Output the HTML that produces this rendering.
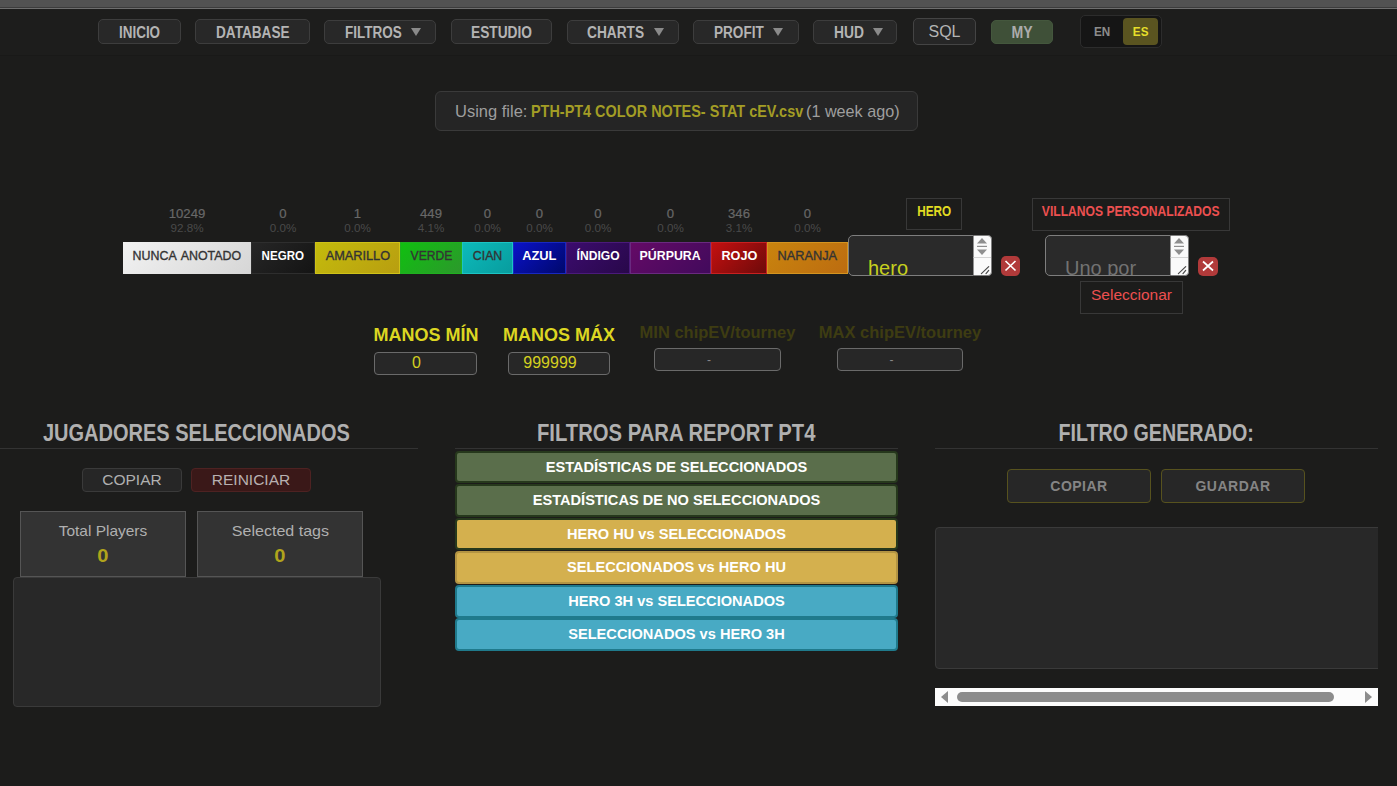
<!DOCTYPE html>
<html><head><meta charset="utf-8">
<style>
*{box-sizing:border-box;margin:0;padding:0}
html,body{width:1397px;height:786px;overflow:hidden;background:#1c1c1b;font-family:"Liberation Sans",sans-serif}
.a{position:absolute}
.c{position:absolute;display:flex;align-items:center;justify-content:center;white-space:nowrap}
.s{display:inline-block;white-space:nowrap}
#topstrip{left:0;top:0;width:1397px;height:7px;background:#525252}
#topline1{left:0;top:7px;width:1397px;height:1px;background:#3c3c3c}
#topline2{left:0;top:8px;width:1397px;height:1px;background:#6e6e6e}
#nav{left:0;top:9px;width:1397px;height:47px;background:#1d1d1c;border-bottom:1px solid #191918}
.nb{background:#282828;border:1px solid #3d3d3d;border-radius:5px;color:#b4b4b4;font-weight:bold;font-size:16px;padding-top:2px}
.nbx{background:#282828;border:1px solid #3d3d3d;border-radius:5px}
.ntx{top:22px;line-height:22px;font-size:16px;font-weight:bold;color:#b4b4b4;white-space:nowrap;transform-origin:0 0}
.ntri{top:28px;width:0;height:0;border-left:5px solid transparent;border-right:5px solid transparent;border-top:8.5px solid #8a8a8a}
.tri{display:inline-block;width:0;height:0;border-left:4.5px solid transparent;border-right:4.5px solid transparent;border-top:8.5px solid #8a8a8a;margin-top:-2px}
.cnt{color:#686868;font-size:12.5px;padding-top:2px;-webkit-text-stroke:.2px #686868;transform:scaleX(1.05)}
.pct{color:#4a4a4a;font-size:11px;transform:scaleX(1.06)}
.cb{font-weight:bold;font-size:13px;padding-bottom:5px}
.cd{font-weight:normal}
.hdr{color:#b0b0b0;font-weight:bold;font-size:23px}
.fb{border:2px solid #26381c;border-radius:4px;background:#5a6e4b;color:#fff;font-weight:bold;font-size:14.6px;letter-spacing:0px;padding-bottom:1px}
</style></head><body>
<div class="a" id="topstrip"></div><div class="a" id="topline1"></div><div class="a" id="topline2"></div>
<div class="a" id="nav"></div>

<!-- nav buttons -->
<div class="a nbx" style="left:98px;top:19px;width:83px;height:25px"></div>
<div class="a ntx" style="left:119.2px;transform:scaleX(0.84)">INICIO</div>
<div class="a nbx" style="left:195px;top:19px;width:115px;height:25px"></div>
<div class="a ntx" style="left:216.1px;transform:scaleX(0.85)">DATABASE</div>
<div class="a nbx" style="left:324px;top:20px;width:112px;height:24px"></div>
<div class="a ntx" style="left:344.8px;transform:scaleX(0.842)">FILTROS</div>
<div class="a ntri" style="left:411.0px"></div>
<div class="a nbx" style="left:451px;top:19px;width:101px;height:25px"></div>
<div class="a ntx" style="left:471.4px;transform:scaleX(0.858)">ESTUDIO</div>
<div class="a nbx" style="left:567px;top:20px;width:112px;height:24px"></div>
<div class="a ntx" style="left:587.3px;transform:scaleX(0.856)">CHARTS</div>
<div class="a ntri" style="left:654.2px"></div>
<div class="a nbx" style="left:693px;top:20px;width:106px;height:24px"></div>
<div class="a ntx" style="left:714.0px;transform:scaleX(0.848)">PROFIT</div>
<div class="a ntri" style="left:773.0px"></div>
<div class="a nbx" style="left:813px;top:20px;width:84px;height:24px"></div>
<div class="a ntx" style="left:833.7px;transform:scaleX(0.862)">HUD</div>
<div class="a ntri" style="left:873.0px"></div>
<div class="c nb" style="left:913px;top:18px;width:63px;height:27px;font-weight:normal;border-color:#444;background:#262626;padding-top:0">SQL</div>
<div class="c nb" style="left:991px;top:20px;width:62px;height:24px;background:#3f5038;border-color:#44573d;color:#acacac"><span class="s" style="transform:scaleX(.88)">MY</span></div>
<div class="a" style="left:1080px;top:15px;width:82px;height:33px;background:#151515;border:1px solid #2c2c2c;border-radius:5px"></div>
<div class="c" style="left:1084px;top:18px;width:36px;height:27px;color:#8c8c8c;font-weight:bold;font-size:13px"><span class="s" style="transform:scaleX(.9)">EN</span></div>
<div class="c" style="left:1123px;top:18px;width:35px;height:27px;background:#5a5420;border-radius:4px;color:#e6de2a;font-weight:bold;font-size:13px"><span class="s" style="transform:scaleX(.9)">ES</span></div>

<!-- using file -->
<div class="a" style="left:435px;top:91px;width:483px;height:40px;background:#252525;border:1px solid #3a3a3a;border-radius:6px"></div>
<div class="a" style="left:455px;top:101px;font-size:16.5px;line-height:20px;color:#9e9e9e;white-space:nowrap">Using file:</div>
<div class="a" style="left:531px;top:101px;font-size:16.5px;line-height:20px;color:#a39d25;font-weight:bold;white-space:nowrap;transform-origin:0 0;transform:scaleX(.874)">PTH-PT4 COLOR NOTES- STAT cEV.csv</div>
<div class="a" style="left:806px;top:101px;font-size:16.2px;line-height:20px;color:#9e9e9e;white-space:nowrap">(1 week ago)</div>

<!-- counts -->
<div class="c cnt" style="left:123px;top:206px;width:128px;height:14px">10249</div>
<div class="c pct" style="left:123px;top:221px;width:128px;height:13px">92.8%</div>
<div class="c cnt" style="left:251px;top:206px;width:64px;height:14px">0</div>
<div class="c pct" style="left:251px;top:221px;width:64px;height:13px">0.0%</div>
<div class="c cnt" style="left:315px;top:206px;width:85px;height:14px">1</div>
<div class="c pct" style="left:315px;top:221px;width:85px;height:13px">0.0%</div>
<div class="c cnt" style="left:400px;top:206px;width:62px;height:14px">449</div>
<div class="c pct" style="left:400px;top:221px;width:62px;height:13px">4.1%</div>
<div class="c cnt" style="left:462px;top:206px;width:51px;height:14px">0</div>
<div class="c pct" style="left:462px;top:221px;width:51px;height:13px">0.0%</div>
<div class="c cnt" style="left:513px;top:206px;width:53px;height:14px">0</div>
<div class="c pct" style="left:513px;top:221px;width:53px;height:13px">0.0%</div>
<div class="c cnt" style="left:566px;top:206px;width:64px;height:14px">0</div>
<div class="c pct" style="left:566px;top:221px;width:64px;height:13px">0.0%</div>
<div class="c cnt" style="left:630px;top:206px;width:81px;height:14px">0</div>
<div class="c pct" style="left:630px;top:221px;width:81px;height:13px">0.0%</div>
<div class="c cnt" style="left:711px;top:206px;width:56px;height:14px">346</div>
<div class="c pct" style="left:711px;top:221px;width:56px;height:13px">3.1%</div>
<div class="c cnt" style="left:767px;top:206px;width:81px;height:14px">0</div>
<div class="c pct" style="left:767px;top:221px;width:81px;height:13px">0.0%</div>

<!-- color buttons -->
<div class="c cb" style="left:123px;top:242px;width:128px;height:32px;background:linear-gradient(135deg,#f2f2f2,#d6d6d6);color:#333"><span class="s" style="transform:scaleX(0.955);font-weight:normal;-webkit-text-stroke:.35px #333;word-spacing:2px">NUNCA ANOTADO</span></div>
<div class="c cb" style="left:251px;top:242px;width:64px;height:32px;background:linear-gradient(135deg,#262626,#141414);border:1px solid #2e2e2e;color:#fff"><span class="s" style="transform:scaleX(.89)">NEGRO</span></div>
<div class="c cb" style="left:315px;top:242px;width:85px;height:32px;background:linear-gradient(135deg,#c4bb0c,#b89e10);border:1px solid #cfc218;color:#333"><span class="s" style="transform:scaleX(0.98);font-weight:normal;-webkit-text-stroke:.35px #333">AMARILLO</span></div>
<div class="c cb" style="left:400px;top:242px;width:62px;height:32px;background:linear-gradient(135deg,#10c010,#2c982c);border:1px solid #20b020;color:#333"><span class="s" style="transform:scaleX(0.93);font-weight:normal;-webkit-text-stroke:.35px #333">VERDE</span></div>
<div class="c cb" style="left:462px;top:242px;width:51px;height:32px;background:linear-gradient(135deg,#0cbaba,#089c9e);border:1px solid #1cc4c4;color:#333"><span class="s" style="transform:scaleX(.95);font-weight:normal;-webkit-text-stroke:.35px #333">CIAN</span></div>
<div class="c cb" style="left:513px;top:242px;width:53px;height:32px;background:linear-gradient(135deg,#0a12c8,#00086c);border:1px solid #1828c0;color:#fff"><span class="s" style="transform:scaleX(0.99)">AZUL</span></div>
<div class="c cb" style="left:566px;top:242px;width:64px;height:32px;background:linear-gradient(135deg,#3c0c6e,#28084a);border:1px solid #4a1a7a;color:#fff"><span class="s" style="transform:scaleX(0.93)">ÍNDIGO</span></div>
<div class="c cb" style="left:630px;top:242px;width:81px;height:32px;background:linear-gradient(135deg,#640a66,#420a5c);border:1px solid #6a2a80;color:#fff"><span class="s" style="transform:scaleX(0.95)">PÚRPURA</span></div>
<div class="c cb" style="left:711px;top:242px;width:56px;height:32px;background:linear-gradient(135deg,#c41010,#6e0a0a);border:1px solid #c82020;color:#fff"><span class="s" style="transform:scaleX(0.975)">ROJO</span></div>
<div class="c cb" style="left:767px;top:242px;width:81px;height:32px;background:linear-gradient(135deg,#c9840e,#bc6c10);border:1px solid #d49420;color:#333"><span class="s" style="transform:scaleX(.98);font-weight:normal;-webkit-text-stroke:.35px #333">NARANJA</span></div>

<!-- hero -->
<div class="c" style="left:906px;top:198px;width:56px;height:32px;border:1px solid #383838;color:#e2dc22;font-weight:bold;font-size:14px;padding-bottom:6px"><span class="s" style="transform:scaleX(.84)">HERO</span></div>
<div class="a" style="left:848px;top:235px;width:144px;height:41px;background:#2a2a2a;border:1px solid #7e7e7e;border-radius:5px;overflow:hidden">
  <div class="a" style="left:19px;top:21px;color:#c6d01e;font-size:20px;line-height:22px">hero</div>
</div>
<svg class="a" style="left:972px;top:235px" width="20" height="41" viewBox="0 0 20 41">
  <path d="M0.5 0.5 H16 Q19.5 0.5 19.5 4 V37 Q19.5 40.5 16 40.5 H0.5 Z" fill="#fafafa" stroke="#7e7e7e" stroke-width="1"/>
  <rect x="0" y="0" width="1.5" height="41" fill="#2a2a2a"/>
  <rect x="0" y="0" width="1.5" height="1" fill="#7e7e7e"/><rect x="0" y="40" width="1.5" height="1" fill="#7e7e7e"/>
  <path d="M5 8.5 L10 3 L15 8.5 Z" fill="#8e8e8e"/>
  <rect x="5" y="10.8" width="10" height="1.2" fill="#8e8e8e"/>
  <path d="M5 14.5 L10 20 L15 14.5 Z" fill="#8e8e8e"/>
  <rect x="1.5" y="22" width="17.5" height="1" fill="#d4d4d4"/>
  <path d="M9.4 38.6 L16.7 31.6 M14 38.6 L16.7 35.4" stroke="#4a4a4a" stroke-width="1.2" fill="none" stroke-linecap="round"/>
</svg>
<div class="a" style="left:1001px;top:256px;width:19px;height:20px;background:#b13a3a;border-radius:5px"></div>
<svg class="a" style="left:1001px;top:256px" width="19" height="20" viewBox="0 0 19 20"><path d="M4.5 5 L14.5 14.5 M14.5 5 L4.5 14.5" stroke="#fff" stroke-width="1.7"/></svg>

<!-- villanos -->
<div class="c" style="left:1032px;top:198px;width:198px;height:33px;border:1px solid #383838;color:#ec5050;font-weight:bold;font-size:14px;padding-bottom:7px"><span class="s" style="transform:scaleX(.865)">VILLANOS PERSONALIZADOS</span></div>
<div class="a" style="left:1045px;top:235px;width:144px;height:41px;background:#2a2a2a;border:1px solid #7e7e7e;border-radius:5px;overflow:hidden">
  <div class="a" style="left:19px;top:21px;color:#727272;font-size:20px;line-height:22px">Uno por</div>
</div>
<svg class="a" style="left:1169px;top:235px" width="20" height="41" viewBox="0 0 20 41">
  <path d="M0.5 0.5 H16 Q19.5 0.5 19.5 4 V37 Q19.5 40.5 16 40.5 H0.5 Z" fill="#fafafa" stroke="#7e7e7e" stroke-width="1"/>
  <rect x="0" y="0" width="1.5" height="41" fill="#2a2a2a"/>
  <rect x="0" y="0" width="1.5" height="1" fill="#7e7e7e"/><rect x="0" y="40" width="1.5" height="1" fill="#7e7e7e"/>
  <path d="M5 8.5 L10 3 L15 8.5 Z" fill="#8e8e8e"/>
  <rect x="5" y="10.8" width="10" height="1.2" fill="#8e8e8e"/>
  <path d="M5 14.5 L10 20 L15 14.5 Z" fill="#8e8e8e"/>
  <rect x="1.5" y="22" width="17.5" height="1" fill="#d4d4d4"/>
  <path d="M9.4 38.6 L16.7 31.6 M14 38.6 L16.7 35.4" stroke="#4a4a4a" stroke-width="1.2" fill="none" stroke-linecap="round"/>
</svg>
<div class="a" style="left:1198px;top:257px;width:20px;height:19px;background:#b13a3a;border-radius:5px"></div>
<svg class="a" style="left:1198px;top:257px" width="20" height="19" viewBox="0 0 20 19"><path d="M5 4.5 L15 13.5 M15 4.5 L5 13.5" stroke="#fff" stroke-width="1.7"/></svg>
<div class="c" style="left:1080px;top:281px;width:103px;height:33px;border:1px solid #383838;color:#ec5050;font-size:15.5px;padding-bottom:6px">Seleccionar</div>

<!-- manos -->
<div class="c" style="left:360px;top:323px;width:132px;height:24px;color:#dcd622;font-weight:bold;font-size:18px">MANOS MÍN</div>
<div class="c" style="left:359px;top:323px;width:400px;height:24px;color:#dcd622;font-weight:bold;font-size:18px;left:359px;width:400px;justify-content:flex-start;padding-left:144px">MANOS MÁX</div>
<div class="c" style="left:374px;top:352px;width:103px;height:23px;background:#272727;border:1px solid #6a6a6a;border-radius:4px;color:#d4d020;font-size:16px;padding-right:18px;padding-bottom:2px">0</div>
<div class="c" style="left:508px;top:352px;width:102px;height:23px;background:#272727;border:1px solid #6a6a6a;border-radius:4px;color:#d4d020;font-size:16px;padding-right:18px;padding-bottom:2px">999999</div>
<div class="c" style="left:620px;top:320px;width:195px;height:24px;color:#3e3c12;font-weight:bold;font-size:16.5px">MIN chipEV/tourney</div>
<div class="c" style="left:800px;top:320px;width:200px;height:24px;color:#3e3c12;font-weight:bold;font-size:16.5px">MAX chipEV/tourney</div>
<div class="c" style="left:654px;top:348px;width:127px;height:23px;background:#272727;border:1px solid #6a6a6a;border-radius:4px;color:#888;font-size:12px;padding-right:17px">-</div>
<div class="c" style="left:837px;top:348px;width:126px;height:23px;background:#272727;border:1px solid #6a6a6a;border-radius:4px;color:#888;font-size:12px;padding-right:17px">-</div>

<!-- left column -->
<div class="c hdr" style="left:0;top:421px;width:393px;height:24px"><span class="s" style="transform:scaleX(.87)">JUGADORES SELECCIONADOS</span></div>
<div class="a" style="left:0;top:448px;width:418px;height:1px;background:#333"></div>
<div class="c" style="left:82px;top:468px;width:100px;height:24px;background:#262626;border:1px solid #3a3a3a;border-radius:4px;color:#b0b0b0;font-size:15.5px">COPIAR</div>
<div class="c" style="left:191px;top:468px;width:120px;height:24px;background:#3a1818;border:1px solid #4e2222;border-radius:4px;color:#b8b0b0;font-size:15.5px">REINICIAR</div>
<div class="a" style="left:20px;top:511px;width:166px;height:66px;background:#333;border:1px solid #555"></div>
<div class="c" style="left:20px;top:521px;width:166px;height:18px;color:#b0b0b0;font-size:15px"><span class="s" style="transform:scaleX(1.03)">Total Players</span></div>
<div class="c" style="left:20px;top:546px;width:166px;height:20px;color:#b0a41c;font-weight:bold;font-size:17.5px"><span class="s" style="transform:scaleX(1.15)">0</span></div>
<div class="a" style="left:197px;top:511px;width:166px;height:66px;background:#333;border:1px solid #555"></div>
<div class="c" style="left:197px;top:521px;width:166px;height:18px;color:#b0b0b0;font-size:15px"><span class="s" style="transform:scaleX(1.07)">Selected tags</span></div>
<div class="c" style="left:197px;top:546px;width:166px;height:20px;color:#b0a41c;font-weight:bold;font-size:17.5px"><span class="s" style="transform:scaleX(1.15)">0</span></div>
<div class="a" style="left:13px;top:577px;width:368px;height:130px;background:#282828;border:1px solid #3a3a3a;border-radius:4px"></div>

<!-- middle column -->
<div class="c hdr" style="left:455px;top:421px;width:443px;height:24px"><span class="s" style="transform:scaleX(.88)">FILTROS PARA REPORT PT4</span></div>
<div class="a" style="left:455px;top:448px;width:443px;height:1px;background:#333"></div>
<div class="c fb" style="left:455px;top:451px;width:443px;height:32px">ESTADÍSTICAS DE SELECCIONADOS</div>
<div class="c fb" style="left:455px;top:484px;width:443px;height:33px">ESTADÍSTICAS DE NO SELECCIONADOS</div>
<div class="c fb" style="left:455px;top:518px;width:443px;height:32px;background:#d4b04e">HERO HU vs SELECCIONADOS</div>
<div class="c fb" style="left:455px;top:551px;width:443px;height:33px;background:#d4b04e;border-color:#b39443">SELECCIONADOS vs HERO HU</div>
<div class="c fb" style="left:455px;top:585px;width:443px;height:33px;background:#48aac4;border-color:#1f7a8c">HERO 3H vs SELECCIONADOS</div>
<div class="c fb" style="left:455px;top:618px;width:443px;height:33px;background:#48aac4;border-color:#1f7a8c">SELECCIONADOS vs HERO 3H</div>

<!-- right column -->
<div class="c hdr" style="left:935px;top:421px;width:443px;height:24px"><span class="s" style="transform:scaleX(.855)">FILTRO GENERADO:</span></div>
<div class="a" style="left:935px;top:448px;width:443px;height:1px;background:#333"></div>
<div class="c" style="left:1007px;top:469px;width:144px;height:34px;background:#272727;border:1px solid #57521e;border-radius:4px;color:#858585;font-weight:bold;font-size:14px;letter-spacing:.5px">COPIAR</div>
<div class="c" style="left:1161px;top:469px;width:144px;height:34px;background:#272727;border:1px solid #57521e;border-radius:4px;color:#858585;font-weight:bold;font-size:14px;letter-spacing:.5px">GUARDAR</div>
<div class="a" style="left:935px;top:527px;width:460px;height:142px;background:#282828;border:1px solid #3a3a3a;border-radius:4px"></div>
<div class="a" style="left:1378px;top:520px;width:19px;height:200px;background:#1c1c1b"></div>
<div class="a" style="left:935px;top:688px;width:443px;height:18px;background:#fcfcfc"></div>
<div class="a" style="left:957px;top:692px;width:377px;height:10px;background:#8c8c8c;border-radius:5px"></div>
<div class="a" style="left:941px;top:691px;width:0;height:0;border-top:6px solid transparent;border-bottom:6px solid transparent;border-right:7px solid #8c8c8c"></div>
<div class="a" style="left:1365px;top:691px;width:0;height:0;border-top:6px solid transparent;border-bottom:6px solid transparent;border-left:7px solid #8c8c8c"></div>

</body></html>
